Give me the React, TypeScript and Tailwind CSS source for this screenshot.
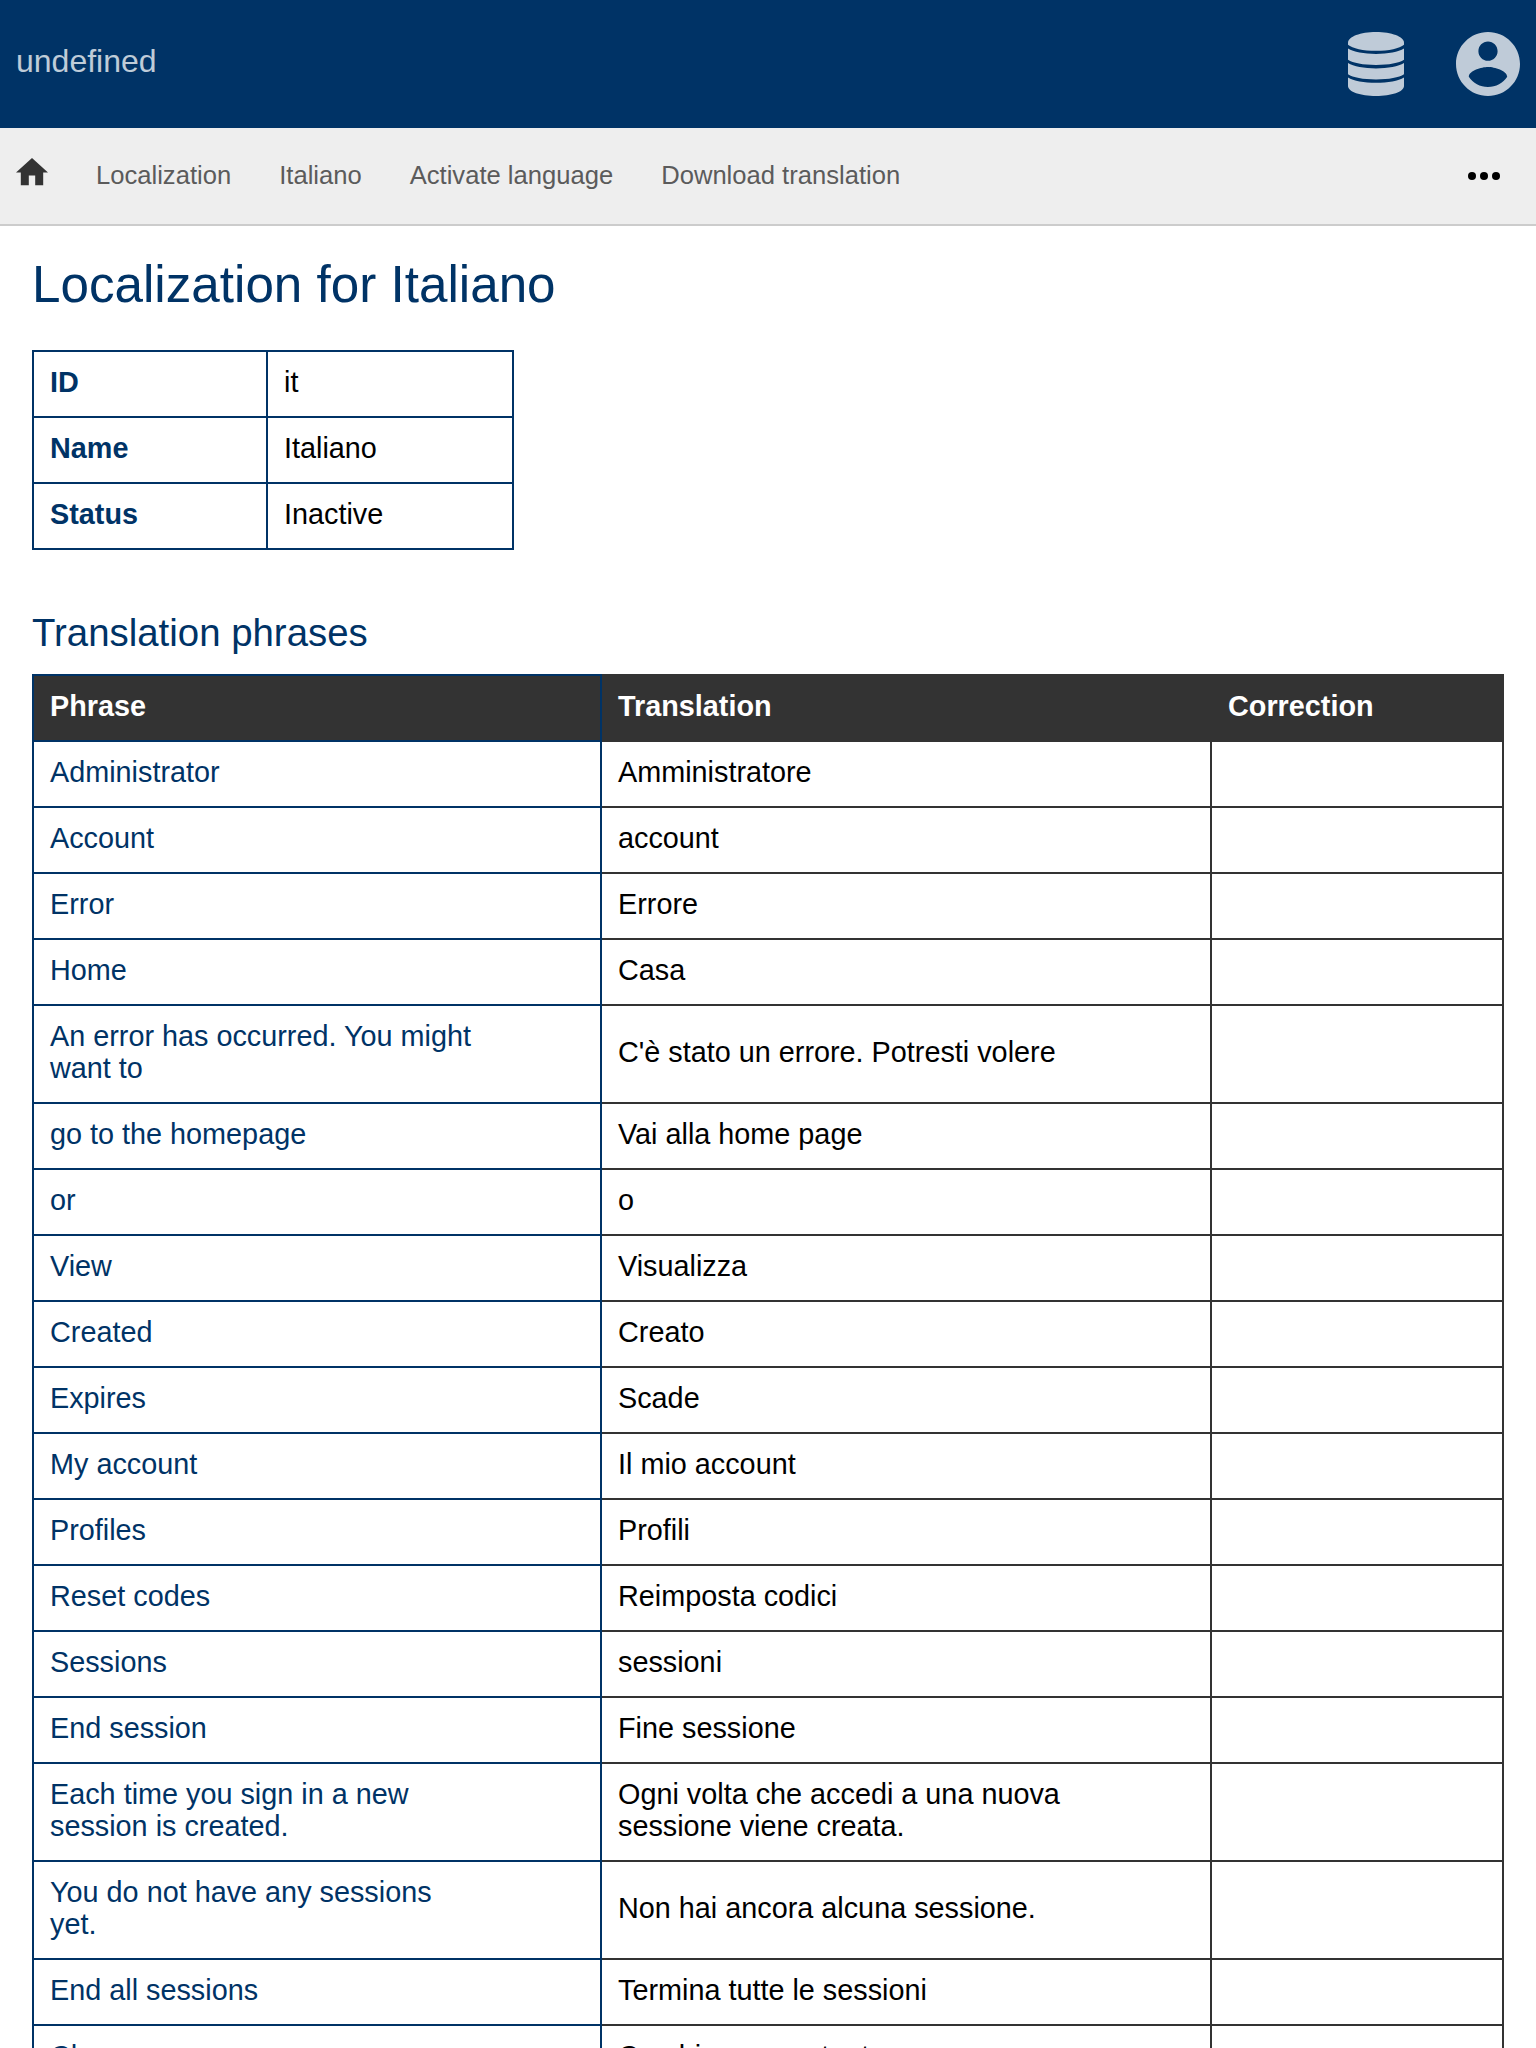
const details = [
  ["ID", "it"],
  ["Name", "Italiano"],
  ["Status", "Inactive"],
];

const phrases = [
  ["Administrator", "Amministratore"],
  ["Account", "account"],
  ["Error", "Errore"],
  ["Home", "Casa"],
  ["An error has occurred. You might want to", "C'è stato un errore. Potresti volere"],
  ["go to the homepage", "Vai alla home page"],
  ["or", "o"],
  ["View", "Visualizza"],
  ["Created", "Creato"],
  ["Expires", "Scade"],
  ["My account", "Il mio account"],
  ["Profiles", "Profili"],
  ["Reset codes", "Reimposta codici"],
  ["Sessions", "sessioni"],
  ["End session", "Fine sessione"],
  ["Each time you sign in a new session is created.", "Ogni volta che accedi a una nuova sessione viene creata."],
  ["You do not have any sessions yet.", "Non hai ancora alcuna sessione."],
  ["End all sessions", "Termina tutte le sessioni"],
  ["Change username", "Cambia nome utente"],
];

function DatabaseIcon() {
  return (
    <svg className="h-16 w-14" viewBox="0 0 56 64" fill="currentColor">
      <path d="M28 0C43.500 0 56 4.700 56 10.500v2.200C51.500 16.500 41 18.800 28 18.800S4.500 16.500 0 12.700v-2.200C0 4.700 12.500 0 28 0z" />
      <path d="M0 16.600C5.500 20 16 22 28 22s22.500-2 28-5.400V27.700C51 30.900 41 32.900 28 32.900S5 30.900 0 27.700z" />
      <path d="M0 31C5.500 34.400 16 36.400 28 36.400S50.500 34.400 56 31V42.300C51 45.500 41 47.500 28 47.500S5 45.500 0 42.300z" />
      <path d="M0 45.400C5.500 48.800 16 50.800 28 50.800s22.500-2 28-5.400V54c0 5.800-12.500 10-28 10S0 59.800 0 54z" />
    </svg>
  );
}

function AccountIcon() {
  return (
    <svg className="size-16" viewBox="2 2 20 20" fill="currentColor">
      <path d="M12 2C6.480 2 2 6.480 2 12s4.480 10 10 10 10-4.480 10-10S17.520 2 12 2zm0 3c1.660 0 3 1.340 3 3s-1.340 3-3 3-3-1.340-3-3 1.340-3 3-3zm0 14.200c-2.500 0-4.710-1.280-6-3.220.030-1.990 4-3.080 6-3.080 1.990 0 5.970 1.090 6 3.080-1.290 1.940-3.500 3.220-6 3.220z" />
    </svg>
  );
}

export default function App() {
  return (
    <div className="h-[2048px] overflow-hidden bg-white font-['Liberation_Sans',Arial,sans-serif] text-[28.8px] leading-8 text-black">
      <header className="flex h-32 items-center justify-between bg-[#003366] px-4 text-white/75">
        <span className="-mt-1.5 text-[32px] leading-9">undefined</span>
        <div className="flex items-center gap-[52px]">
          <DatabaseIcon />
          <AccountIcon />
        </div>
      </header>
      <nav className="flex h-[98px] items-center border-b-2 border-[#cccccc] bg-[#eeeeee] pl-4 pr-9 text-[25.6px] text-[#5b5b5b]">
        <svg className="-mt-2 mr-12 h-[27.2px] w-8 fill-[#333333]" viewBox="2 3 20 17">
          <path d="M10 20v-6h4v6h5v-8h3L12 3 2 12h3v8z" />
        </svg>
        <div className="-mt-0.5 flex gap-12">
          <a>Localization</a>
          <a>Italiano</a>
          <a>Activate language</a>
          <a>Download translation</a>
        </div>
        <div className="ml-auto flex gap-1">
          <i className="size-2 rounded-full bg-black" />
          <i className="size-2 rounded-full bg-black" />
          <i className="size-2 rounded-full bg-black" />
        </div>
      </nav>
      <main className="px-8 pt-[30px]">
        <h1 className="text-[51.2px] leading-[57px] text-[#003366]">Localization for Italiano</h1>
        <table className="mt-[37px] w-[482px] table-fixed border-collapse">
          <colgroup>
            <col className="w-[234px]" />
            <col />
          </colgroup>
          <tbody>
            {details.map(([name, value]) => (
              <tr key={name}>
                <th className="border-2 border-[#003366] px-4 pb-[18px] pt-[14px] text-left font-bold text-[#003366]">{name}</th>
                <td className="border-2 border-[#003366] px-4 pb-[18px] pt-[14px]">{value}</td>
              </tr>
            ))}
          </tbody>
        </table>
        <h2 className="mt-[61px] text-[38.4px] leading-[43px] text-[#003366]">Translation phrases</h2>
        <table className="mt-5 w-full table-fixed border-collapse text-left">
          <colgroup>
            <col className="w-[568px]" />
            <col className="w-[610px]" />
            <col />
          </colgroup>
          <thead>
            <tr className="bg-[#333333] text-white">
              <th className="border-2 border-[#003366] px-4 pb-[18px] pt-[14px] font-bold">Phrase</th>
              <th className="border-2 border-[#333333] px-4 pb-[18px] pt-[14px] font-bold">Translation</th>
              <th className="border-2 border-[#333333] px-4 pb-[18px] pt-[14px] font-bold">Correction</th>
            </tr>
          </thead>
          <tbody>
            {phrases.map(([phrase, translation]) => (
              <tr key={phrase}>
                <td className="border-2 border-[#003366] pb-[18px] pl-4 pr-[121px] pt-[14px] text-[#003366]">{phrase}</td>
                <td className="border-2 border-[#333333] pb-[18px] pl-4 pr-[122px] pt-[14px]">{translation}</td>
                <td className="border-2 border-[#333333] p-4" />
              </tr>
            ))}
          </tbody>
        </table>
      </main>
    </div>
  );
}
